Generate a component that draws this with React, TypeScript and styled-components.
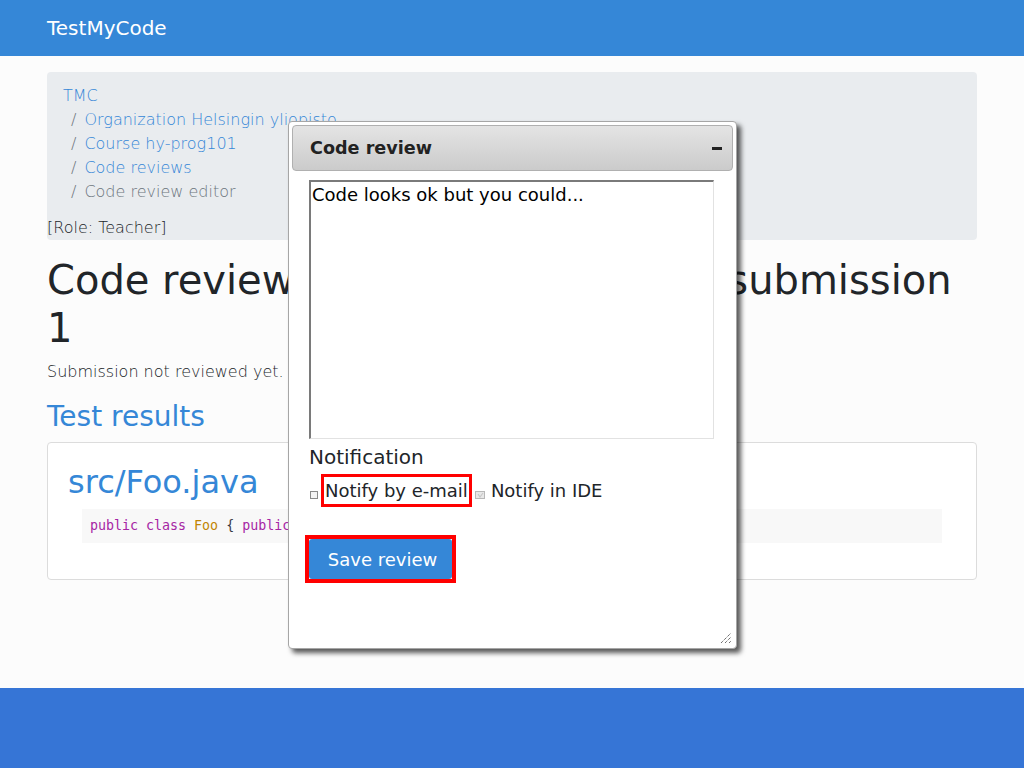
import React from "react";
import styled, { createGlobalStyle } from "styled-components";

const GlobalStyle = createGlobalStyle`
  html, body {
    margin: 0;
    padding: 0;
    background: #fcfcfc;
    font-family: "DejaVu Sans", Verdana, sans-serif;
    font-weight: 300;
    color: #212529;
    font-size: 16px;
    line-height: 24px;
  }
  * { box-sizing: border-box; }
`;

const blue = "#3587d7";

const Navbar = styled.header`
  height: 56px;
  background: ${blue};
  display: flex;
  align-items: center;
  padding: 0 47px;
`;

const Brand = styled.a`
  color: #ffffff;
  font-size: 20px;
  font-weight: 400;
  text-decoration: none;
`;

const Main = styled.main`
  padding: 16px 47px 108px;
`;

const Breadcrumb = styled.nav`
  background: #e9ecef;
  border-radius: 4px;
`;

const Crumbs = styled.ol`
  list-style: none;
  margin: 0;
  padding: 12px 16px;
`;

const Crumb = styled.li<{ $first?: boolean; $active?: boolean }>`
  display: block;
  padding-left: ${(p) => (p.$first ? "0" : "8px")};
  color: ${(p) => (p.$active ? "#6c757d" : "inherit")};
  &::before {
    content: ${(p) => (p.$first ? "none" : '"/"')};
    color: #6c757d;
    padding-right: 8px;
  }
`;

const Link = styled.a`
  color: ${blue};
  text-decoration: none;
`;

const Role = styled.div`
  color: #212529;
`;

const Title = styled.h1`
  font-size: 40px;
  line-height: 48px;
  font-weight: 400;
  margin: 16px 0 8px;
`;

const Para = styled.p`
  margin: 0 0 16px;
`;

const SectionTitle = styled.h2`
  font-size: 28px;
  line-height: 33.6px;
  font-weight: 400;
  color: ${blue};
  margin: 0 0 8px;
`;

const Card = styled.section`
  background: #ffffff;
  border: 1px solid #dcdcdc;
  border-radius: 4px;
  padding: 20px;
`;

const FileName = styled.h3`
  font-size: 32px;
  line-height: 38.4px;
  font-weight: 400;
  color: ${blue};
  margin: 0 0 8px;
`;

const Code = styled.pre`
  margin: 0 14px 16px;
  padding: 8px;
  background: #f8f8f8;
  font-family: "DejaVu Sans Mono", monospace;
  font-weight: 400;
  font-size: 13.3px;
  line-height: 18px;
  color: #383a42;
`;

const Kw = styled.span<{ $c: string }>`
  color: ${(p) => p.$c};
`;

const Footer = styled.footer`
  height: 80px;
  background: #3675d6;
`;

const Dialog = styled.div`
  position: absolute;
  left: 288px;
  top: 121px;
  width: 449px;
  height: 528px;
  background: #ffffff;
  border: 1px solid #a6a6a6;
  border-radius: 4px;
  padding: 3px;
  font-weight: 400;
  box-shadow: 4px 4px 5px rgba(0, 0, 0, 0.65);
`;

const TitleBar = styled.div`
  height: 46px;
  border: 1px solid #b0b0b0;
  border-radius: 4px;
  background: linear-gradient(#e4e4e4, #cbcbcb);
  display: flex;
  align-items: center;
  justify-content: space-between;
  padding: 0 10px 0 17px;
`;

const DialogTitle = styled.span`
  font-weight: 700;
  font-size: 17.6px;
  color: #222222;
`;

const Minimize = styled.span`
  width: 10px;
  height: 3px;
  background: #222222;
`;

const DialogBody = styled.div`
  padding: 9px 17px 0;
  display: flex;
  flex-direction: column;
  align-items: flex-start;
`;

const Textarea = styled.textarea`
  width: 405px;
  height: 259px;
  resize: none;
  margin: 0;
  padding: 1px 1px;
  font-family: "DejaVu Sans", Verdana, sans-serif;
  font-size: 18px;
  line-height: 24px;
  color: #000000;
  border-style: solid;
  border-width: 2px 1px 1px 2px;
  border-color: #7a7a7a #e2e2e2 #e2e2e2 #7a7a7a;
  outline: none;
`;

const Label = styled.div`
  font-size: 20px;
  line-height: 24px;
  margin-top: 6px;
`;

const OptionRow = styled.div`
  display: flex;
  align-items: center;
  margin-top: 5px;
  font-size: 18px;
  line-height: 25px;
`;

const Box = styled.span`
  width: 8px;
  height: 8px;
  border: 1px solid #8a8a8a;
  background: #f4f4f4;
  margin: 9px 3px 0 1px;
`;

const Highlight = styled.span<{ $w: number }>`
  display: inline-flex;
  border: ${(p) => p.$w}px solid #ff0000;
`;

const OptText = styled.span`
  padding: 1px;
`;

const CheckedBox = styled.svg`
  margin: 9px 6px 0 3px;
`;

const SaveButton = styled.button`
  font-family: "DejaVu Sans", Verdana, sans-serif;
  font-size: 18px;
  color: #ffffff;
  background: ${blue};
  border: none;
  border-radius: 3px;
  width: 143px;
  height: 40px;
  padding: 0 0 0 4px;
`;

const ButtonWrap = styled.div`
  margin-top: 28px;
  margin-left: -4px;
`;

const Resize = styled.svg`
  position: absolute;
  right: 4px;
  bottom: 4px;
`;

export default function App() {
  return (
    <>
      <GlobalStyle />
      <Navbar>
        <Brand href="#">TestMyCode</Brand>
      </Navbar>
      <Main>
        <Breadcrumb>
          <Crumbs>
            <Crumb $first>
              <Link href="#">TMC</Link>
            </Crumb>
            <Crumb>
              <Link href="#">Organization Helsingin yliopisto</Link>
            </Crumb>
            <Crumb>
              <Link href="#">Course hy-prog101</Link>
            </Crumb>
            <Crumb>
              <Link href="#">Code reviews</Link>
            </Crumb>
            <Crumb $active>Code review editor</Crumb>
          </Crumbs>
          <Role>[Role: Teacher]</Role>
        </Breadcrumb>
        <Title>Code review for exercise Trivial_1 submission 1</Title>
        <Para>Submission not reviewed yet.</Para>
        <SectionTitle>Test results</SectionTitle>
        <Card>
          <FileName>src/Foo.java</FileName>
          <Code>
            <Kw $c="#a626a4">public</Kw> <Kw $c="#a626a4">class</Kw>{" "}
            <Kw $c="#c18401">Foo</Kw> {"{"} <Kw $c="#a626a4">public</Kw>{" "}
            <Kw $c="#a626a4">static</Kw> <Kw $c="#a626a4">void</Kw> main() {"{"} {"}"} {"}"}
          </Code>
        </Card>
      </Main>
      <Footer />
      <Dialog>
        <TitleBar>
          <DialogTitle>Code review</DialogTitle>
          <Minimize />
        </TitleBar>
        <DialogBody>
          <Textarea defaultValue="Code looks ok but you could..." />
          <Label>Notification</Label>
          <OptionRow>
            <Box />
            <Highlight $w={3}>
              <OptText>Notify by e-mail</OptText>
            </Highlight>
            <CheckedBox width="10" height="8" viewBox="0 0 10 8">
              <rect x="0.5" y="0.5" width="9" height="7" fill="#e8e8e8" stroke="#b8b8b8" />
              <path d="M3 3 L5 6 L8 2" fill="none" stroke="#c8c8c8" strokeWidth="1.2" />
            </CheckedBox>
            <span>Notify in IDE</span>
          </OptionRow>
          <ButtonWrap>
            <Highlight $w={4}>
              <SaveButton>Save review</SaveButton>
            </Highlight>
          </ButtonWrap>
        </DialogBody>
        <Resize width="12" height="12" viewBox="0 0 12 12">
          <path d="M1 11 L11 1 M5 11 L11 5 M9 11 L11 9" stroke="#333" strokeWidth="1" strokeDasharray="1 1" fill="none" />
        </Resize>
      </Dialog>
    </>
  );
}
